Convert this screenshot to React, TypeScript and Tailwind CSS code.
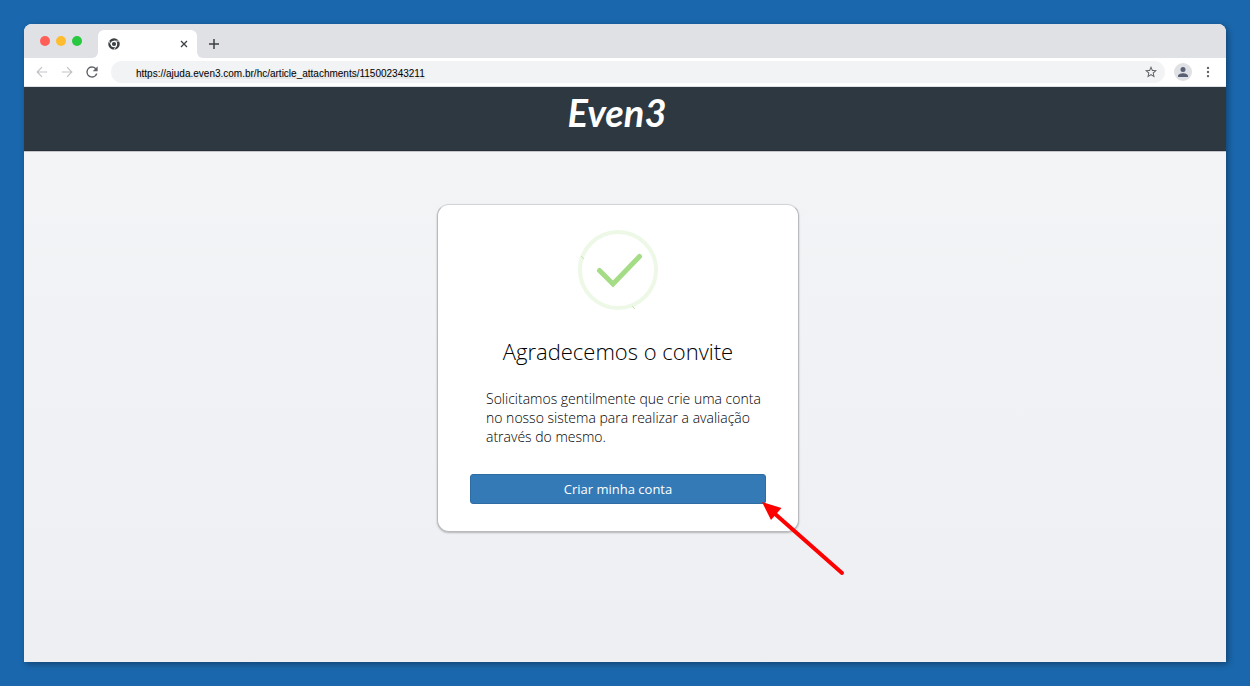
import type { ReactNode } from "react";

const lights = [
  { label: "Close window", color: "bg-[#ff5f57]" },
  { label: "Minimize window", color: "bg-[#febc2e]" },
  { label: "Maximize window", color: "bg-[#28c840]" },
];

function IconButton({ label, children }: { label: string; children: ReactNode }) {
  return (
    <button type="button" aria-label={label} className="flex size-3 items-center justify-center">
      {children}
    </button>
  );
}

function ChromeIcon() {
  return (
    <svg viewBox="0 0 24 24" className="size-3 shrink-0" aria-hidden="true">
      <circle cx="12" cy="12" r="11.5" fill="#3c4043" />
      <g fill="none" stroke="#dfe1e5" strokeWidth="2">
        <path d="M12 6.2h10.5" />
        <path d="M7 14.9 1.800 5.800" />
        <path d="M17 14.900l-5.300 9.100" />
      </g>
      <circle cx="12" cy="12" r="6.4" fill="#fff" />
      <circle cx="12" cy="12" r="4.2" fill="#3c4043" />
    </svg>
  );
}

// The white strip shows through the rounded corners beside the active tab.
function TabStrip() {
  return (
    <div className="flex h-[34px] bg-white">
      <div className="flex w-[74px] items-center gap-1.5 rounded-br-md bg-[#dfe1e5] pl-4">
        {lights.map((light) => (
          <button
            key={light.label}
            type="button"
            aria-label={light.label}
            className={`size-2.5 rounded-full ${light.color}`}
          />
        ))}
      </div>
      <div className="flex w-[99px] items-end bg-linear-to-b from-[#dfe1e5] from-50% to-white to-50%">
        <div className="flex h-7 flex-1 items-center justify-between rounded-t-md bg-white pr-[7px] pl-2.5">
          <ChromeIcon />
          <IconButton label="Close tab">
            <svg viewBox="0 0 12 12" className="size-3" stroke="#3c4043" strokeWidth="1.3">
              <path d="M3 3l6 6M9 3L3 9" />
            </svg>
          </IconButton>
        </div>
      </div>
      <div className="flex flex-1 items-end rounded-bl-md bg-[#dfe1e5] pb-2 pl-[11px]">
        <IconButton label="New tab">
          <svg viewBox="0 0 12 12" className="size-3" stroke="#3c4043" strokeWidth="1.5">
            <path d="M6 1v10M1 6h10" />
          </svg>
        </IconButton>
      </div>
    </div>
  );
}

function Toolbar() {
  return (
    <div className="flex h-[29px] items-center border-b border-[#dfe1e5] bg-white px-3">
      <div className="flex w-[75px] items-center gap-[13px]">
        <IconButton label="Back">
          <svg viewBox="0 0 12 12" className="size-3" fill="none" stroke="#c0c3c6" strokeWidth="1.2">
            <path d="M11.2 6H1.2M6 1.2L1.2 6 6 10.8" />
          </svg>
        </IconButton>
        <IconButton label="Forward">
          <svg viewBox="0 0 12 12" className="size-3" fill="none" stroke="#c0c3c6" strokeWidth="1.2">
            <path d="M.8 6h10M6 1.2L10.8 6 6 10.8" />
          </svg>
        </IconButton>
        <IconButton label="Reload">
          <svg viewBox="3.500 3.500 17 17" className="size-3" fill="#5f6368">
            <path d="M17.65 6.35A7.96 7.96 0 0 0 12 4a8 8 0 1 0 7.73 10h-2.08A6 6 0 1 1 12 6c1.66 0 3.14.69 4.22 1.78L13 11h7V4l-2.35 2.35z" />
          </svg>
        </IconButton>
      </div>
      <div className="flex h-[22px] min-w-0 flex-1 items-center rounded-full bg-[#f1f3f4] pr-2 pl-[25px]">
        <input
          type="text"
          aria-label="Address"
          defaultValue="https://ajuda.even3.com.br/hc/article_attachments/115002343211"
          className="h-5 min-w-0 flex-1 bg-transparent pt-0.5 font-['Liberation_Sans',Arial,sans-serif] text-[10px] text-black outline-none text-shadow-[1px_2px_2px_rgba(0,0,0,0.15)]"
        />
        <IconButton label="Bookmark">
          <svg viewBox="2 2 20 20" className="size-3 shrink-0" fill="#5f6368">
            <path d="M22 9.24l-7.19-.62L12 2 9.19 8.63 2 9.24l5.46 4.73L5.82 21 12 17.27 18.18 21l-1.63-7.03L22 9.24zM12 15.4l-3.76 2.27 1-4.28-3.32-2.88 4.38-.38L12 6.1l1.71 4.04 4.38.38-3.32 2.88 1 4.28L12 15.4z" />
          </svg>
        </IconButton>
      </div>
      <button
        type="button"
        aria-label="Profile"
        className="ml-[9px] flex size-[18px] items-center justify-center rounded-full bg-[#dfe1e5]"
      >
        <svg viewBox="4 4 16 16" className="size-2.5" fill="#5a6175">
          <path d="M12 12a4 4 0 1 0 0-8 4 4 0 0 0 0 8zm0 2c-2.67 0-8 1.34-8 4v2h16v-2c0-2.66-5.33-4-8-4z" />
        </svg>
      </button>
      <div className="ml-2.5">
        <IconButton label="Menu">
          <svg viewBox="0 0 12 12" className="size-3" fill="#5f6368">
            <circle cx="6" cy="1.9" r="1.2" />
            <circle cx="6" cy="6" r="1.2" />
            <circle cx="6" cy="10.1" r="1.2" />
          </svg>
        </IconButton>
      </div>
    </div>
  );
}

function CheckMark() {
  return (
    <svg viewBox="0 0 80 80" className="size-20" fill="none" aria-hidden="true">
      <circle cx="40" cy="40" r="38" stroke="#edf8e7" strokeWidth="4" />
      <path d="M21.5 40.5L35 54 61.500 26.500" stroke="#a5dc86" strokeWidth="5" strokeLinecap="round" />
      <path d="M3 26l3 3M54 76l3 3" stroke="#c3e8af" strokeWidth="1" />
    </svg>
  );
}

function InviteCard() {
  return (
    <section className="relative flex w-[362px] flex-col items-center rounded-xl border border-[#b9babd] border-t-[#d3d4d7] bg-white px-8 pt-[25px] pb-[27px] shadow-[0_1px_2px_rgba(0,0,0,0.25)]">
      <CheckMark />
      <h1 className="mt-[26px] text-[22px] leading-[30px] font-light text-black">
        Agradecemos o convite
      </h1>
      <p className="mt-[23px] w-full pl-4 text-[14px] leading-[19px] font-light text-black">
        Solicitamos gentilmente que crie uma conta no nosso sistema para realizar a avaliação
        através do mesmo.
      </p>
      <button
        type="button"
        className="mt-7 h-[30px] w-full rounded-[3px] border border-[#2e6da4] bg-[#337ab7] text-[13px] leading-5 text-white"
      >
        Criar minha conta
      </button>
      <svg
        viewBox="0 0 84 76"
        className="absolute top-[297px] left-[324px] h-[76px] w-[84px]"
        aria-hidden="true"
      >
        <path d="M12 11L80 71" stroke="#f00" strokeWidth="4" strokeLinecap="round" />
        <path d="M0 0l19.500 6-10.500 12z" fill="#f00" />
      </svg>
    </section>
  );
}

export default function App() {
  return (
    <div className="flex min-h-screen flex-col bg-[#1a67ad] p-6 font-['Open_Sans',sans-serif]">
      <div className="flex flex-1 flex-col overflow-hidden rounded-t-lg shadow-[2px_2px_6px_rgba(0,0,0,0.35)]">
        <TabStrip />
        <Toolbar />
        <header className="flex h-16 justify-center border-b border-[#27303a] bg-[#2e3841] pt-1 pr-4">
          <span className="font-['Lato',sans-serif] text-[38px] leading-[42px] font-bold text-white italic">
            Even3
          </span>
        </header>
        <main className="flex flex-1 flex-col items-center border-t border-[#c4c6c9] bg-linear-to-b from-[#f3f4f6] to-[#eeeff3] pt-[52px] pr-3.5 pb-8">
          <InviteCard />
        </main>
      </div>
    </div>
  );
}
